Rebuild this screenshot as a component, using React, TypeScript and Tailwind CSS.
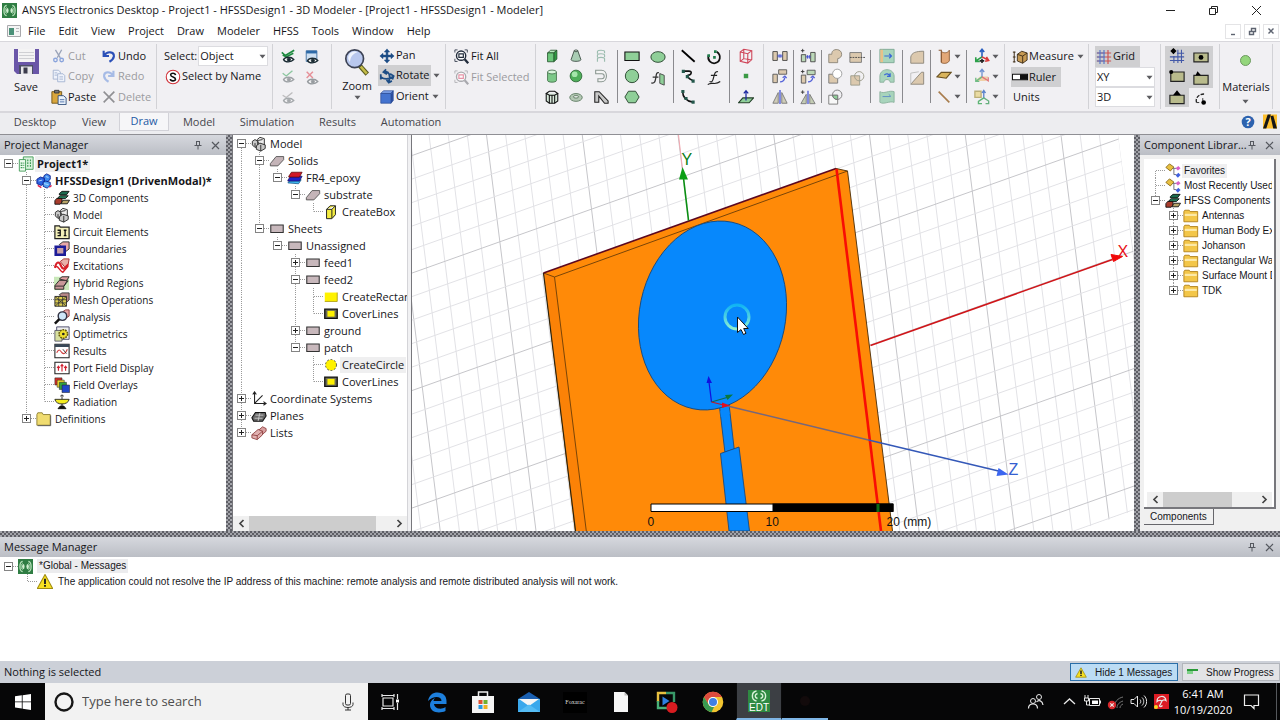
import React from "react";

const UI = "font-['Open_Sans','Noto_Sans',sans-serif]";

/* ---------- small icon helpers ---------- */

function Svg({ s = 18, children }: { s?: number; children: React.ReactNode }) {
  return (
    <svg width={s} height={s} viewBox="0 0 18 18" fill="none" className="shrink-0" aria-hidden="true">
      {children}
    </svg>
  );
}

function Caret({ x = "" }: { x?: string }) {
  return (
    <svg width="7" height="5" viewBox="0 0 7 5" className={"shrink-0 " + x} aria-hidden="true">
      <path d="M0.5 0.8h6L3.5 4.4z" fill="#5c5c60" />
    </svg>
  );
}

function Eye({ c = "#1b2b33" }: { c?: string }) {
  return (
    <g stroke={c}>
      <path d="M4 13c2-3.4 8.500-3.400 11.500 0c-3 3.400-9.500 3.400-11.500 0z" fill="#fff" strokeWidth="1.500" />
      <circle cx="10" cy="13" r="1.800" fill={c} />
    </g>
  );
}

const G = "#8fcf98";
const T = "#dcc9ae";

const icons: Record<string, React.ReactNode> = {
  cut: (
    <g stroke="#9aa3b8" strokeWidth="1.500">
      <path d="M5 2l5.500 9M12 2L7 11" />
      <circle cx="5" cy="13.500" r="2" stroke="#8aa4dc" />
      <circle cx="12" cy="13.500" r="2" stroke="#8aa4dc" />
    </g>
  ),
  copy: (
    <g fill="#eef2fb" stroke="#a3b2d0">
      <path d="M2.500 2.500h6l2 2v8h-8z" />
      <path d="M7.500 6.500h6l2 2v7h-8z" />
      <path d="M9.500 10h4M9.500 12.500h4M4 5.500h3M4 8h3" />
    </g>
  ),
  paste: (
    <g>
      <path d="M1 3h11v13H1z" fill="#d9a63c" stroke="#6e5216" />
      <path d="M4 1.500h5v3H4z" fill="#777" stroke="#333" />
      <path d="M8 7.500h6l3 2.500v7.500H8z" fill="#e9f1fb" stroke="#2b4a78" />
      <path d="M10 12h5M10 14.500h5" stroke="#4a6ea8" />
    </g>
  ),
  undo: <path d="M3 3v6h6M3.500 8.500C7 3 15 4 14.500 9.500c-.3 3-2.500 4.500-5 6" stroke="#2b50b8" strokeWidth="2.400" />,
  redo: <path d="M14 3v6H8M13.500 8.500C10 3 3 4 3.500 9.500c.3 3 2.500 4.500 5 6" stroke="#a6bbe6" strokeWidth="2.400" />,
  del: <path d="M3 3l12 12M15 3L3 15" stroke="#8f8f93" strokeWidth="1.800" />,
  sbn: (
    <g>
      <circle cx="9" cy="9" r="7.600" fill="#fff" stroke="#d03038" strokeWidth="1.200" />
      <path d="M11.800 6.800C11.500 4 6.200 4 6.400 6.800C6.600 9.500 11.800 8.500 11.800 11.400C11.800 14 6.200 14 6 11.200" stroke="#111" strokeWidth="1.800" />
    </g>
  ),
  eyeG: (<g><path d="M2 5l4 3.500L16 2.500M3 8l4 2L15 6" stroke="#1e8a40" strokeWidth="1.800" /><Eye /></g>),
  eyeB: (<g><path d="M2.500 2h12v12h-12z" fill="#cfe0f2" stroke="#3e6d9e" /><path d="M2.500 2h12v3h-12z" fill="#2e6aa8" /><Eye /></g>),
  eyeF: (<g opacity=".55"><path d="M3 6l4 3L14 3" stroke="#3aa45c" strokeWidth="1.500" /><Eye c="#5c6468" /></g>),
  eyeR: (<g opacity=".6"><path d="M3 2l7 7M10 2L3 9" stroke="#e0505c" strokeWidth="1.600" /><Eye c="#5c6468" /></g>),
  eyeN: (<g opacity=".5"><path d="M3 7l4 2.500L14 4" stroke="#888" strokeWidth="1.500" /><Eye c="#5c6468" /></g>),
  pan: <path d="M9 1L6 4.500h2V8H4.500V6L1 9l3.500 3v-2H8v3.500H6L9 17l3-3.500h-2V10h3.500v2L17 9l-3.500-3v2H10V4.500h2z" fill="#1d4d86" stroke="#1d4d86" strokeWidth=".6" />,
  rotate: (
    <g stroke="#1d4d86" strokeWidth="2">
      <path d="M8 1.500l-3 3l4 2.500M5.500 4.500c6-1.500 8 4 5.500 11M8.500 13.500l2.500 3l3.500-2M2 7v6M2 10c4 3 9 3 14-.5M12.500 6.500l4 2.500L15 13" />
    </g>
  ),
  orient: (
    <g stroke="#2a4a94" strokeWidth=".8">
      <path d="M2 5l3-3h11l-2.500 3z" fill="#7fa2ea" />
      <path d="M13.500 5L16 2v11l-2.500 3z" fill="#2d51a6" />
      <path d="M2 5h11.500v11H2z" fill="#4473cf" />
    </g>
  ),
  fit: (
    <g stroke="#222c3c">
      <circle cx="8" cy="7.500" r="5.200" strokeWidth="1.600" fill="#fff" />
      <path d="M5.500 5.500h5v4h-5z" strokeWidth="1.300" />
      <path d="M12 11.500l4 4.500" strokeWidth="2.600" />
      <path d="M1 4V1h3M12 1h3v3M1 11v3h3" strokeWidth=".9" />
    </g>
  ),
  fitSel: (
    <g stroke="#a9a9ae">
      <circle cx="8" cy="7.500" r="5.200" strokeWidth="1.500" fill="#fbfbfb" />
      <path d="M5.500 5.500h5v4h-5z" stroke="#e794a8" strokeWidth="1.300" />
      <path d="M12 11.500l4 4.500" strokeWidth="2.400" />
      <path d="M1 4V1h3M12 1h3v3M1 11v3h3" strokeWidth=".9" />
    </g>
  ),
  box: (
    <g stroke="#22502a" strokeWidth=".9">
      <path d="M4 5.500l3.500-3h7L11 5.500z" fill="#b9ecbf" />
      <path d="M11 5.500l3.500-3v10l-3.500 3z" fill="#2f9a42" />
      <path d="M4 5.500h7v10H4z" fill="#6cc77a" />
    </g>
  ),
  cyl: (
    <g stroke="#3c6a44" strokeWidth=".9">
      <path d="M4 4.500v9.500c0 2.600 10 2.600 10 0V4.500z" fill="#7cc888" />
      <ellipse cx="9" cy="4.500" rx="5" ry="2.200" fill="#d9f4dc" />
    </g>
  ),
  poly: (
    <g stroke="#111" strokeWidth="1.200">
      <path d="M2.500 5v8.500l3.500 2.500h6l3.500-2.500V5" fill="#d8eadb" />
      <path d="M2.500 5L6 2.500h6L15.500 5L12 7H6zM6 7v9M12 7v9M9 7v9" />
    </g>
  ),
  cone: (
    <g stroke="#2c3c34" strokeWidth=".9">
      <path d="M7 3L3.500 13c0 2.700 11 2.700 11 0L11 3z" fill="#a9cdb4" />
      <ellipse cx="9" cy="3.200" rx="2" ry="1" fill="#e6f6ea" />
    </g>
  ),
  sphere: (<g><circle cx="9" cy="9" r="6.600" fill="#4fae5a" stroke="#2f6a38" /><circle cx="7.500" cy="7" r="3.200" fill="#a5e6ab" /></g>),
  torus: (
    <g stroke="#5d7a60">
      <ellipse cx="9" cy="9.500" rx="7" ry="4.400" fill="#b4c8b4" />
      <ellipse cx="9" cy="8.800" rx="3" ry="1.400" fill="#f3f3f3" />
    </g>
  ),
  helix: <path d="M5 15.500V12c0-2 8-2 8 0M5 10.500V8c0-2 8-2 8 0M5 6.500V4c0-2 8-2 8 0M13 12v3.500M13 8v2M13 4v2" stroke="#9dbdb0" strokeWidth="1.300" />,
  spiral: <path d="M3 2.500h6.500c7.500 0 7.500 13 0 13H5.500V12H10c3.500 0 3.500-5.500 0-5.500H3z" fill="#f4f4f4" stroke="#8a9690" strokeWidth="1.200" />,
  wire: <path d="M2 15V3h5l10 10.500v2.500h-4L6.500 8v7z" fill="#c8c8c8" stroke="#222" strokeWidth="1.200" />,
  rect: <path d="M1 4.500h16v9.500H1z" fill={G} stroke="#111" strokeWidth="1.200" />,
  circ: <circle cx="9" cy="9" r="7.500" fill={G} stroke="#24402a" />,
  hex: <path d="M5 2.500h8l4 6.500l-4 6.500H5L1 9z" fill={G} stroke="#24402a" />,
  oval: <ellipse cx="9" cy="9" rx="8" ry="6" fill={G} stroke="#24402a" />,
  fsheet: (
    <g>
      <path d="M11 4l5 2v11l-5-2z" fill={G} stroke="#444" />
      <path d="M10 3C7 2 7 6 6.500 9s-1 6.500-5 5.500M3 8h6.500" stroke="#333" strokeWidth="1.400" />
    </g>
  ),
  line: <path d="M2 2.500l14.500 13" stroke="#000" strokeWidth="2" />,
  spline: (
    <g>
      <path d="M4 3.500h6c4 0 3 4 0 4.500c-3 .5-2 3 5 6.500" stroke="#111" strokeWidth="1.800" />
      <path d="M2 2h3.500v3.500H2zM6.500 8h3.500v3.500H6.500zM13 13h3.500v3.500H13z" fill="#24584c" />
    </g>
  ),
  arc3: (
    <g>
      <path d="M3 3c0 6 4 10.500 12 12" stroke="#111" strokeWidth="1.800" />
      <path d="M1.500 1h3.500v3.500H1.500zM5 9h3.500v3.500H5zM13 13h3.500v3.500H13z" fill="#24584c" />
    </g>
  ),
  arcc: (
    <g>
      <path d="M3 7c-2 6 3 9.500 7 9c6-1 8-9 2-13" stroke="#111" strokeWidth="2" />
      <path d="M8 8h3v3H8zM9 1.500h3v3H9zM1.500 6h3v3h-3z" fill="#1f7a4a" />
    </g>
  ),
  fcurve: <path d="M13.500 2c-3-1-4 2-5 6.500s-2 5.500-4.500 4.500M5.500 6h7M2 16.500c4-4 8 1.500 14-3.500" stroke="#222" strokeWidth="1.300" />,
  region: (
    <g stroke="#cf4458" strokeWidth="1.200">
      <path d="M2.500 4.500l4-3l9 1.500v10L11 17L2.500 15zM2.500 4.500L11 6.500l4.500-3.500M11 6.500V17M6.500 1.500v10.500l9 1.500M6.500 12l-4 3" />
    </g>
  ),
  point: <path d="M6.500 6.500h5v5h-5z" fill="#3b9a45" />,
  plane: (
    <g>
      <path d="M.5 15.500L5.500 10H17.500l-5 5.500z" fill={G} stroke="#24402a" strokeWidth="1.200" />
      <path d="M9 13V2.500M6.500 5L9 2l2.500 3" stroke="#1c28a0" strokeWidth="1.400" />
    </g>
  ),
  mv: (<g><path d="M1 4h5v10H1zM12 4h5v10h-5z" fill={T} stroke="#444" /><path d="M6 9h6M8 7v4M10 7v4" stroke="#3a49d0" /></g>),
  rot: (<g><path d="M1 7h5v9.500H1zM7.500 2h9v5h-9z" fill={T} stroke="#555" /><path d="M9 15.500c4 0 5-2 5.500-5M12 11l2.500-2l2 2.500" stroke="#5663d8" strokeWidth="1.400" /></g>),
  mir: (<g><path d="M1 16L7 4v12zM17 16L11 4v12z" fill="#cfccb8" stroke="#777" /><path d="M9 1v16" stroke="#5663d8" strokeWidth="1.600" /></g>),
  mv2: (<g><path d="M1.500 7.500h5v8h-5zM12 5h5v10.500h-5z" fill="#bcd8b8" stroke="#444" /><path d="M6.500 10h5.500M8.500 8v4M10.500 8v4" stroke="#3a49d0" /><path d="M1 3h4M3 1v4" stroke="#333" /></g>),
  rot2: (<g><path d="M1.500 8h5v9h-5z" fill={T} stroke="#555" /><path d="M8 2.500h9v5H8z" fill="#bcd8b8" stroke="#555" /><path d="M9 15.500c4 0 5-2 5.500-5M12 11l2.500-2l2 2.500" stroke="#5663d8" strokeWidth="1.400" /><path d="M1 4h4M3 2v4" stroke="#333" /></g>),
  mir2: (<g><path d="M1 16.500L7 6v10.500zM17 16.500L11 6v10.500z" fill="#c4ccb4" stroke="#777" /><path d="M9 2v15" stroke="#5663d8" strokeWidth="1.600" /><path d="M1 3.500h4M3 1.500v4" stroke="#333" /></g>),
  unite: <path d="M2 7h3.500C4.500 0 16.500 0 16.500 7c0 3-2 4.500-4.500 5v4.500H2z" fill={T} stroke="#8a8478" />,
  sub: (<g><path d="M2 7h10v10H2z" fill={T} stroke="#777" /><circle cx="11.500" cy="6.500" r="5.200" fill="#fff" stroke="#999" /></g>),
  inter: (<g stroke="#777"><path d="M2 7h10v10H2z" fill="#f8f8f8" /><path d="M6.200 7h5.800v4.800A5.300 5.300 0 0 1 6.200 7z" fill={G} /><circle cx="11.500" cy="6.500" r="5.300" /></g>),
  split: (<g><path d="M1 4h13v11H1z" fill={T} stroke="#777" /><path d="M1 9.500h17" stroke="#444" strokeDasharray="2 1" /></g>),
  impr: (<g stroke="#998"><path d="M2 6.500h10V17H2z" fill={T} /><circle cx="11.500" cy="7" r="5.200" /></g>),
  sw1: (<g><path d="M1 1.500h16v15H1z" fill="#a8d4bc" stroke="#7ba894" /><path d="M1.500 2H4.500v14H1.500z" fill="#e9c089" /><path d="M6 9h8M11.500 6.500L14 9l-2.500 2.500" stroke="#3a66d8" strokeWidth="1.400" /></g>),
  sw2: (<g><path d="M1 16V9C1.500-.5 16.500-.5 17 9v7h-4.500c0-4-7-4-7 0z" fill="#a8d4bc" stroke="#8ab09c" /><path d="M6 8c2-2.500 5-1.500 6 1M12.500 6v3.500H9" stroke="#3a66d8" strokeWidth="1.400" /></g>),
  sw3: (<g><path d="M1 3c5 3 10-2 16 0v12c-6-2-11 3-16 0z" fill="#a8d4bc" stroke="#8ab09c" /><path d="M4 8.500h9M11 6l2.500 2.500" stroke="#5b8ac8" /></g>),
  fil: <path d="M2 16V9C3 4 8 2.500 16.500 2.500V16z" fill={T} stroke="#8a8478" />,
  cham: (<g><path d="M2 16L14 2.500h2.500V16z" fill={T} stroke="#8a8478" /><path d="M2 16V3.500L11 2" stroke="#bbb" /></g>),
  surf: (<g><path d="M6 4c3 2 7 2 9-1.500v12c-2 3-6 3.500-9 2z" fill="#e3a878" stroke="#8a5a34" /><path d="M3 2.500h3V16" stroke="#8a5a34" strokeWidth="1.200" /></g>),
  sheet: <path d="M1 10l5-5h11l-5.500 6.500z" fill="#d9b45c" stroke="#6a5222" strokeWidth="1.300" />,
  edge: <path d="M3 3l12 12" stroke="#a87c4c" strokeWidth="1.800" />,
  cs1: (<g strokeWidth="1.800"><path d="M9 10V2M6.500 4.500L9 1.500l2.500 3" stroke="#2a5fc0" /><path d="M9 10l-6 4M2 10.500V15h4.500" stroke="#2ca04a" /><path d="M9 10l7 3.500M14 10l2.500 4l-4 1" stroke="#d83838" /><path d="M9 12v5M6.500 14.500h5" stroke="#222" /></g>),
  cs2: (<g strokeWidth="1.500" opacity=".65"><path d="M2 13.500l5-4h9l-3 5H5z" fill="#f0c080" /><path d="M9 10V2M6.500 4.500L9 1.500l2.500 3" stroke="#2a5fc0" /><path d="M9 10l-7 5M2 11v4h4" stroke="#2ca04a" /><path d="M9 10l7 4.500v-4" stroke="#d83838" /></g>),
  cs3: (<g strokeWidth="1.500" opacity=".75"><path d="M1 2.500h7v7H1z" fill="#e8d488" stroke="#aa9a50" /><path d="M11 10V2M9 4.500L11 1.500l2 3" stroke="#2a5fc0" /><path d="M11 10l-6 4v2.500h4" stroke="#2ca04a" /><path d="M11 10l5.500 3.500v3H13" stroke="#3a9a58" /></g>),
  measure: (
    <g stroke="#3a2a14">
      <path d="M2.500 3v12M1 3.500h3M1 9h3M1 14.500h3" strokeWidth="1.100" />
      <path d="M6 6l5-3.500l6 2v8l-5 3.500l-6-2.500z" fill="#c69a54" />
      <path d="M6 6l6 2l5-3.500M12 8v8" />
    </g>
  ),
  ruler: (<g><path d="M.5 6h17v6H.5z" fill="#fff" stroke="#111" strokeWidth="1.200" /><path d="M9 6h8.500v6H9z" fill="#111" /></g>),
  grid: (
    <g strokeWidth="1.300">
      <path d="M1 4.500h16M1 9h16M1 13.500h16M13.500 1v16" stroke="#cc5252" />
      <path d="M1 4.500h9M1 9h9M1 13.500h9M4.500 1v16M9 1v16" stroke="#5578c8" />
    </g>
  ),
  snap1: (<g><path d="M1 10h16M1 14h16M10 2v15M14 2v15M5.500 9v8M9 6h8" stroke="#4258a8" strokeWidth="1.200" /><path d="M5 0l3.500 3.500L5 7L1.500 3.500z" fill="#000" /></g>),
  snap2: (<g><path d="M1 4.500h16v10H1z" fill="#b9bb8c" stroke="#222" strokeWidth="1.300" /><circle cx="9" cy="9.500" r="2.700" fill="#000" /></g>),
  snap3: (<g><path d="M2 4.500h15v10.500H2z" fill="#b9bb8c" stroke="#222" strokeWidth="1.300" /><circle cx="2.500" cy="4.500" r="2.300" fill="#000" /></g>),
  snap4: (<g><path d="M1 6h16v10H1z" fill="#b9bb8c" stroke="#222" strokeWidth="1.300" /><path d="M5 1.500l4 4.500H3z" fill="#000" /></g>),
  snap5: (<g><path d="M1 7h16v9.500H1z" fill="#b9bb8c" stroke="#222" strokeWidth="1.300" /><path d="M9 1.500l4.500 5.500h-9z" fill="#000" /></g>),
  snap6: (<g><path d="M4 13C2 7 8 2.500 14 3.500" stroke="#222" strokeWidth="1.500" strokeDasharray="4 1.500" /><path d="M4 13h3M11 8v3" stroke="#222" /><circle cx="12" cy="13" r="2.600" fill="#000" /></g>),
};

/* ---------- tree icons ---------- */

const treeIcons: Record<string, React.ReactNode> = {
  project: (<g><path d="M6 1h11v14H6z" fill="#d9f2dc" stroke="#3f9a55" /><path d="M1.500 4h7v13h-7z" fill="#eefbef" stroke="#3f9a55" /><path d="M3 8h4M3 10.500h4M3 13h4M11 4v9M14 4v9" stroke="#3f9a55" strokeWidth="1.300" strokeDasharray="2 1" /></g>),
  design: (<g stroke="#0b1f8c"><path d="M9 3l3-2l4 2v4l-3 3H8z" fill="#3f8cf0" /><path d="M1 7l4-2.500L9.500 6v5l-3.500 3l-5-2z" fill="#2a62e0" /><path d="M8 10l3-1l5 1.500v3.500L12.500 17L8 15z" fill="#4fa0f4" /><path d="M3 9l4-1M9 12l5 1M11 4l3 1" stroke="#bfe0ff" /><path d="M2 14l4 2.500M15 16l2.500-2" stroke="#e02050" strokeWidth="1.600" /></g>),
  comp3d: (<g stroke="#111"><path d="M6 4l3-2.500h8L14 5.500H6z" fill="#1d6b50" /><path d="M4 9l3-2.500h9L13 9.500H4z" fill="#27805e" /><path d="M1 12l2-2.500h6v4l-2 2.500H1z" fill="#a83c2c" /><path d="M8 15.500l2-4h7.500l-2.500 4z" fill="#b7a468" /></g>),
  model: (<g stroke="#222" fill="#c9c9c9"><path d="M1.500 6l3-2l3 2v5l-3 2l-3-3z" /><path d="M7 4l3-2.500L15 3v7l-5 2z" fill="#eee" /><path d="M6 11l4-3l6 2v4l-5 3l-5-2z" /><path d="M11 10v7M4.500 8v4M8 5l5-1" /></g>),
  circuit: (<g><path d="M1 3V2h5l1 1.500h10V16.500H1z" fill="#f3efb8" stroke="#222" strokeWidth="1.400" /><path d="M4 7h3v6H4M11 7h3M11 13h3M12.500 7v6M4 10h3" stroke="#111" strokeWidth="1.500" /></g>),
  bound: (<g><path d="M6 4l4-3h7v8l-4 3z" fill="#e8a8a8" stroke="#222" /><path d="M2 6.500h10v9H2z" fill="#c8a0a8" stroke="#1c1c98" strokeWidth="3" /></g>),
  excit: (<g><path d="M7 4l4-3h6l-1 6l-4 3z" fill="#e8b0a8" stroke="#a02828" /><path d="M1 11c2-8 5-7 7-2s5 3 8-2" stroke="#d82028" strokeWidth="2.400" /><path d="M1 11c3-5 5 4 9 5l6-7" stroke="#d82028" strokeWidth="1.600" /></g>),
  hybrid: (<g><path d="M0 2h17v15H0z" fill="#c8e8b8" /><path d="M6 4.500L9 2h8l-3 4.500z" fill="#e0a0a0" stroke="#222" /><path d="M1 12l5-6h9l-4 7v3H1z" fill="#c89898" stroke="#222" /><path d="M1 12.500h10l5-6" stroke="#222" /></g>),
  mesh: (<g><path d="M6 3l3-2h8v8l-3 3z" fill="#b88888" stroke="#333" /><path d="M1 5h13v11H1z" fill="#e0d050" stroke="#222" /><path d="M1 8.700h13M1 12.300h13M5.300 5v11M9.700 5v11M1 5l13 11M14 5L1 16" stroke="#333" strokeWidth=".9" /></g>),
  anal: (<g><path d="M10 3l3-2h4v7l-3 2z" fill="#e8a8a8" stroke="#833" /><circle cx="9.500" cy="8" r="4.800" fill="#cfe6f8" stroke="#334" strokeWidth="1.600" /><path d="M6 11.500L1 16.500" stroke="#111" strokeWidth="2.800" /></g>),
  opti: (<g><path d="M3 1h14v14H3z" fill="#eee" stroke="#446" /><path d="M1 5h8v12H1z" fill="#d8e0a0" stroke="#556" /><circle cx="10.500" cy="9" r="4.800" fill="#f0e030" stroke="#665c10" strokeDasharray="2 1" strokeWidth="1.800" /><circle cx="10.500" cy="9" r="1.500" fill="#222" /></g>),
  result: (<g><path d="M1 1.500h16v15H1z" fill="#fff" stroke="#222" strokeWidth="1.200" /><path d="M1 1.500h16v3H1z" fill="#384858" /><path d="M3 11c3-6 4-2 6 0s4 1 6-4" stroke="#d04040" strokeWidth="1.300" /><path d="M10 7l4 5" stroke="#333" /></g>),
  port: (<g><path d="M1 2.500h16v13H1z" fill="#fff" stroke="#222" strokeWidth="1.200" /><path d="M5 12V8M9 13V6M13 12V8M3.500 9L5 7l1.500 2M7.500 7L9 5l1.500 2M11.500 9L13 7l1.500 2" stroke="#d02030" strokeWidth="1.300" /></g>),
  field: (<g stroke="#222" strokeWidth=".6"><path d="M1 1h8v8H1z" fill="#d83028" /><path d="M3.500 3.500h8v8h-8z" fill="#f0d830" /><path d="M6 6h8v8H6z" fill="#30a040" /><path d="M9 9h8.500v8.500H9z" fill="#2048c8" /></g>),
  radi: (<g><path d="M1 6c1 7 15 7 16 0z" fill="#f4ec20" stroke="#222" /><path d="M9 6V1.500M7 2.500L9 1l2 1.500" stroke="#222" /><path d="M9 11v3M4.500 16.500h9L11 13.500H7z" fill="#111" stroke="#111" /></g>),
  folderP: (<g><path d="M1 4l1-2h5l1 2h8v12H1z" fill="#f0dc70" stroke="#8a7c30" /><path d="M16.500 5v11.500H2" stroke="#555" /></g>),
  folder: (<g><path d="M1 4l1-1.500h5L8 4h8.500v11.500H1z" fill="#f3c648" stroke="#b08018" /><path d="M2 6.500h13.500V9H2z" fill="#fce9a6" /></g>),
  slab: <path d="M1.500 12L8 4h8.500v3.500L10 14.500H1.500z" fill="#c4b4b8" stroke="#555" />,
  fr4: (<g strokeWidth=".8"><path d="M1 14.500L4 11h12l-3 4.500z" fill="#40b8f0" stroke="#105080" /><path d="M1 11.500L4 7h13l-3 5.500H1z" fill="#2020c8" stroke="#101060" /><path d="M2 7L5 2.500h12L14 8H2z" fill="#d01828" stroke="#500" /></g>),
  ybox: <path d="M4 6l4-4h6v10l-4 4.500H4zM4 6h6l4-4M10 6v10" fill="#f4ec40" stroke="#222" strokeWidth="1.100" />,
  sheet: <path d="M2 4.500h14v8.500H2z" fill="#c8b8bc" stroke="#333" strokeWidth="1.200" />,
  yrect: (<g><path d="M2 4h14v10H2z" fill="#fff200" /><path d="M2 14h14V4" stroke="#b0a010" /></g>),
  cover: (<g><path d="M2 3.500h14v10.500H2z" fill="#6b6b58" stroke="#111" strokeWidth="1.500" /><path d="M5 5.500h8v6.500H5z" fill="#fff200" /></g>),
  ycirc: <circle cx="9" cy="9" r="6.200" fill="#fff200" stroke="#444" strokeDasharray="2 2" />,
  coord: <path d="M4 1v13h13M4 14L13 5M2 4l2-3l2 3M14 12l3 2l-3 2" stroke="#222" strokeWidth="1.200" />,
  planes: (<g stroke="#111" strokeWidth="1.200"><path d="M1 11l4-6h11l1 4l-4 6H3z" fill="#666" /><path d="M5 8h9M4 11.500h9M10 5.500L8 14.500" stroke="#ccc" strokeWidth="1" /></g>),
  lists: (<g stroke="#833" strokeWidth=".9"><path d="M6 8l7-6l4 2v3l-7 6z" fill="#d8a0a0" /><path d="M1 11l7-6l5 2v4l-6 5.500l-6-2z" fill="#e0b0b0" /><path d="M7 12l6-5M1 11l6 1v4" /></g>),
  fav: (<g><path d="M1 5l4-4l5 3.500L6 9z" fill="#e8c040" stroke="#8a6a18" /><path d="M9 6h4M10 6v7h3" stroke="#667" /><path d="M12 6l3-2.500l2.500 2.500l-3 2.500z" fill="#d860c8" /><path d="M12 14l3-3l2.500 2.500l-3 3z" fill="#4060e0" /></g>),
};

/* ---------- tree ---------- */

type Node = { t: string; i: string; open?: boolean; kids?: Node[]; sel?: boolean; bold?: boolean };

function Connector({ h, up, down, across, mark }: { h: number; up?: boolean; down?: boolean; across?: boolean; mark?: "+" | "-" }) {
  const m = Math.floor(h / 2) + 0.5;
  return (
    <svg width="18" height={h} viewBox={`0 0 18 ${h}`} className="shrink-0" aria-hidden="true">
      <g stroke="#9a9a9a" strokeDasharray="1 1">
        {up && <path d={`M8.500 0V${m}`} />}
        {down && <path d={`M8.500 ${m + 0.5}V${h}`} />}
        {across && <path d={`M9 ${m}H18`} />}
      </g>
      {mark && (
        <g stroke="#848484">
          <rect x="4.500" y={m - 4} width="8" height="8" fill="#fff" />
          <path d={`M6 ${m}h5`} stroke="#222" />
          {mark === "+" && <path d={`M8.500 ${m - 2.5}v5`} stroke="#222" />}
        </g>
      )}
    </svg>
  );
}

function Rows({ nodes, h, trail = [] }: { nodes: Node[]; h: number; trail?: boolean[] }) {
  return (
    <>
      {nodes.map((n, k) => {
        const last = k === nodes.length - 1;
        const first = k === 0 && trail.length === 0;
        return (
          <li key={k}>
            <div className="flex items-center whitespace-nowrap" style={{ height: h }}>
              {trail.map((go, j) => (
                <Connector key={j} h={h} up={go} down={go} />
              ))}
              <Connector h={h} up={!first} down={!last} across mark={n.kids ? (n.open ? "-" : "+") : undefined} />
              <Svg s={16}>{treeIcons[n.i]}</Svg>
              <span className={"ml-px px-0.5 " + (n.sel ? "bg-[#efeff0] " : "") + (n.bold ? "text-[11px] font-bold" : "")}>{n.t}</span>
            </div>
            {n.open && n.kids && (
              <ul>
                <Rows nodes={n.kids} h={h} trail={[...trail, !last]} />
              </ul>
            )}
          </li>
        );
      })}
    </>
  );
}

const leaf = (t: string, i: string): Node => ({ t, i });

const projectTree: Node[] = [
  {
    t: "Project1*", i: "project", open: true, sel: true, bold: true,
    kids: [
      {
        t: "HFSSDesign1 (DrivenModal)*", i: "design", open: true, bold: true,
        kids: [
          leaf("3D Components", "comp3d"), leaf("Model", "model"), leaf("Circuit Elements", "circuit"),
          leaf("Boundaries", "bound"), leaf("Excitations", "excit"), leaf("Hybrid Regions", "hybrid"),
          leaf("Mesh Operations", "mesh"), leaf("Analysis", "anal"), leaf("Optimetrics", "opti"),
          leaf("Results", "result"), leaf("Port Field Display", "port"), leaf("Field Overlays", "field"),
          leaf("Radiation", "radi"),
        ],
      },
      { t: "Definitions", i: "folderP", kids: [] },
    ],
  },
];

const modelTree: Node[] = [
  {
    t: "Model", i: "model", open: true,
    kids: [
      { t: "Solids", i: "slab", open: true, kids: [
        { t: "FR4_epoxy", i: "fr4", open: true, kids: [
          { t: "substrate", i: "slab", open: true, kids: [leaf("CreateBox", "ybox")] },
        ] },
      ] },
      { t: "Sheets", i: "sheet", open: true, kids: [
        { t: "Unassigned", i: "sheet", open: true, kids: [
          { t: "feed1", i: "sheet", kids: [] },
          { t: "feed2", i: "sheet", open: true, kids: [leaf("CreateRectangle", "yrect"), leaf("CoverLines", "cover")] },
          { t: "ground", i: "sheet", kids: [] },
          { t: "patch", i: "sheet", open: true, kids: [{ t: "CreateCircle", i: "ycirc", sel: true }, leaf("CoverLines", "cover")] },
        ] },
      ] },
    ],
  },
  { t: "Coordinate Systems", i: "coord", kids: [] },
  { t: "Planes", i: "planes", kids: [] },
  { t: "Lists", i: "lists", kids: [] },
];

const libTree: Node[] = [
  { t: "Favorites", i: "fav", sel: true },
  leaf("Most Recently Used", "fav"),
  {
    t: "HFSS Components", i: "comp3d", open: true,
    kids: ["Antennas", "Human Body Exposure", "Johanson", "Rectangular Waveguide", "Surface Mount Devices", "TDK"].map(
      (t) => ({ t, i: "folder", kids: [] })
    ),
  },
];

/* ---------- ribbon parts ---------- */

function Tool({ i, label, off, on, w = "" }: { i: string; label: string; off?: boolean; on?: boolean; w?: string }) {
  return (
    <button className={"flex h-[21px] items-center gap-px whitespace-nowrap px-px " + w + (on ? " bg-[#cfcfd1]" : "") + (off ? " text-[#9b9b9f]" : "")}>
      <Svg s={16}>{icons[i]}</Svg>
      {label}
    </button>
  );
}

function Cell({ i, name, caret }: { i: string; name: string; caret?: boolean }) {
  return (
    <button aria-label={name} className="flex h-[21px] w-full items-center justify-center">
      <Svg s={16}>{icons[i]}</Svg>
      {caret && <Caret x="ml-0.5" />}
    </button>
  );
}

function Col({ w, items, caret }: { w: string; items: [string, string][]; caret?: boolean }) {
  return (
    <div className={"flex shrink-0 flex-col " + w}>
      {items.map(([i, name]) => (
        <Cell key={name} i={i} name={name} caret={caret} />
      ))}
    </div>
  );
}

const Bar = () => <div className="my-1 w-px shrink-0 bg-[#8a8a8e]" />;

function Group({ w, children }: { w: string; children: React.ReactNode }) {
  return <div className={"my-0.5 flex shrink-0 border-r border-[#d2d2d6] py-0.5 " + w}>{children}</div>;
}

function Drop({ id, label, w, value }: { id: string; label?: string; w: string; value: string }) {
  return (
    <div className={"relative h-5 " + w}>
      <select id={id} aria-label={label} defaultValue={value} className="h-full w-full appearance-none border border-[#dcdce0] bg-white pl-px">
        <option>{value}</option>
      </select>
      <Caret x="pointer-events-none absolute right-0.5 top-2" />
    </div>
  );
}

function Ribbon() {
  return (
    <div className="flex h-[72px] shrink-0 overflow-hidden border-b-2 border-t border-[#d8d7dc] bg-[#f1f0f3] pl-0.5">
      <Group w="w-[155px]">
        <button className="flex w-12 flex-col items-center pt-0.5">
          <svg width="27" height="27" viewBox="0 0 27 27" aria-hidden="true">
            <path d="M1 1h25v25H4l-3-3z" fill="#6a56a8" />
            <path d="M5 1h17v13H5z" fill="#f4f3f4" />
            <path d="M6 4.500h15M6 7.500h15M6 10.500h15" stroke="#d0d0d4" />
            <path d="M6 17h14v9H6z" fill="#4d4f66" />
            <path d="M8 18.500h11v7.500H8z" fill="#e8e8ea" />
            <path d="M10.500 19.500h4v6h-4z" fill="#3c3c4c" />
          </svg>
          <span className="mt-1">Save</span>
        </button>
        <div className="flex w-[50px] flex-col items-start">
          <Tool i="cut" label="Cut" off />
          <Tool i="copy" label="Copy" off />
          <Tool i="paste" label="Paste" />
        </div>
        <div className="flex flex-col items-start">
          <Tool i="undo" label="Undo" />
          <Tool i="redo" label="Redo" off />
          <Tool i="del" label="Delete" off />
        </div>
      </Group>
      <Group w="w-[116px] flex-col pl-[7px]">
        <div className="flex items-center gap-px">
          <label htmlFor="selmode">Select:</label>
          <Drop id="selmode" w="w-[70px]" value="Object" />
        </div>
        <Tool i="sbn" label="Select by Name" />
      </Group>
      <Group w="w-[59px] pl-[3px]">
        <Col w="w-6" items={[["eyeG", "Show selection"], ["eyeF", "Show in active view"], ["eyeN", "Hide in active view"]]} />
        <Col w="w-6" items={[["eyeB", "Visibility dialog"], ["eyeR", "Hide selection"]]} />
      </Group>
      <Group w="w-[114px]">
        <button className="flex w-[46px] flex-col items-center pl-1 pt-0.5">
          <svg width="28" height="28" viewBox="0 0 28 30" aria-hidden="true">
            <path d="M17 19l8 9" stroke="#5a5a20" strokeWidth="5" />
            <path d="M18 20l6.500 7.500" stroke="#c4bc48" strokeWidth="2.600" />
            <circle cx="11.500" cy="11.500" r="9.500" fill="#b9c8ee" stroke="#3c4254" strokeWidth="1.800" />
            <path d="M4.500 11a7 7 0 0 1 10-6.500C10 6 7 9 6.500 15a7 7 0 0 1-2-4z" fill="#eef3fd" />
          </svg>
          <span className="mt-0.5">Zoom</span>
          <Caret />
        </button>
        <div className="flex flex-col">
          <Tool i="pan" label="Pan" />
          <div className="flex items-center"><Tool i="rotate" label="Rotate" on w="w-[53px]" /><Caret x="ml-0.5" /></div>
          <div className="flex items-center"><Tool i="orient" label="Orient" w="w-[53px]" /><Caret x="ml-px" /></div>
        </div>
      </Group>
      <Group w="w-[90px] flex-col pl-[7px]">
        <Tool i="fit" label="Fit All" />
        <Tool i="fitSel" label="Fit Selected" off />
      </Group>
      <Group w="w-[228px] pl-1">
        <Col w="w-6" items={[["box", "Box"], ["cyl", "Cylinder"], ["poly", "Polyhedron"]]} />
        <Col w="w-6" items={[["cone", "Cone"], ["sphere", "Sphere"], ["torus", "Torus"]]} />
        <Col w="w-[29px] pr-1" items={[["helix", "Helix"], ["spiral", "Spiral"], ["wire", "Bondwire"]]} />
        <Bar />
        <Col w="w-7" items={[["rect", "Rectangle"], ["circ", "Circle"], ["hex", "Regular polygon"]]} />
        <Col w="w-[27px] pr-1" items={[["oval", "Ellipse"], ["fsheet", "Equation surface"]]} />
        <Bar />
        <Col w="w-7" items={[["line", "Line"], ["spline", "Spline"], ["arc3", "Arc by points"]]} />
        <Col w="w-[27px] pr-1" items={[["arcc", "Center arc"], ["fcurve", "Equation curve"]]} />
        <Bar />
        <Col w="w-[31px]" items={[["region", "Region"], ["point", "Point"], ["plane", "Plane"]]} />
      </Group>
      <Group w="w-[241px] pl-0.5">
        <Col w="w-[27px]" items={[["mv", "Move"], ["rot", "Rotate copy"], ["mir", "Mirror"]]} />
        <Bar />
        <Col w="w-[27px]" items={[["mv2", "Duplicate along line"], ["rot2", "Duplicate around axis"], ["mir2", "Duplicate mirror"]]} />
        <Bar />
        <Col w="w-[26px]" items={[["unite", "Unite"], ["sub", "Subtract"], ["inter", "Intersect"]]} />
        <Col w="w-[22px] pr-1" items={[["split", "Split"], ["impr", "Imprint"]]} />
        <Bar />
        <Col w="w-[31px]" items={[["sw1", "Sweep along vector"], ["sw2", "Sweep around axis"], ["sw3", "Sweep along path"]]} />
        <Bar />
        <Col w="w-[27px]" items={[["fil", "Fillet"], ["cham", "Chamfer"]]} />
        <Bar />
        <Col w="w-[35px]" caret items={[["surf", "Surface"], ["sheet", "Sheet"], ["edge", "Edge"]]} />
        <Bar />
        <Col w="w-[38px]" caret items={[["cs1", "Relative coordinate system"], ["cs2", "Face coordinate system"], ["cs3", "Object coordinate system"]]} />
      </Group>
      <Group w="w-[84px] flex-col items-start pl-1.5">
        <div className="flex items-center"><Tool i="measure" label="Measure" /><Caret x="ml-0.5" /></div>
        <Tool i="ruler" label="Ruler" on w="w-[50px]" />
        <button className="h-[21px] px-0.5">Units</button>
      </Group>
      <Group w="w-[72px] flex-col items-start pl-1.5">
        <Tool i="grid" label="Grid" on w="w-[45px]" />
        <Drop id="plane" label="Drawing plane" w="w-[60px]" value="XY" />
        <Drop id="mode" label="Movement mode" w="w-[60px]" value="3D" />
      </Group>
      <Group w="w-[59px] pl-1">
        <div className="flex bg-[#cfcfd1]"><Col w="w-6" items={[["snap1", "Snap to grid"], ["snap3", "Snap to vertex"], ["snap5", "Snap to edge center"]]} /></div>
        <div className="h-[42px] bg-[#cfcfd1]"><Col w="w-6" items={[["snap2", "Snap to face center"], ["snap4", "Snap to edge"], ["snap6", "Snap to arc center"]]} /></div>
      </Group>
      <Group w="w-[53px] justify-center">
        <button className="flex flex-col items-center pt-2">
          <svg width="13" height="13" viewBox="0 0 13 13" className="mb-3" aria-hidden="true">
            <circle cx="6.500" cy="6.500" r="5" fill="#94d67c" stroke="#6d9a60" />
          </svg>
          <span className="leading-4">Materials</span>
          <Caret x="mt-1" />
        </button>
      </Group>
    </div>
  );
}

/* ---------- panel header ---------- */

function PanelHead({ title }: { title: string }) {
  return (
    <div className="flex h-5 shrink-0 items-center bg-linear-to-b from-[#d6d8de] to-[#bbbec5] pl-1 pr-1.5">
      <h2 className="grow whitespace-nowrap">{title}</h2>
      <button aria-label="Auto hide" className="mr-2">
        <svg width="10" height="10" viewBox="0 0 10 10" fill="none" stroke="#55585f" aria-hidden="true">
          <path d="M3 1.500h4M3.500 1.500v4M6.500 1v5M1.500 5.500h7M5 6v3.500" />
        </svg>
      </button>
      <button aria-label="Close panel">
        <svg width="9" height="9" viewBox="0 0 9 9" fill="none" stroke="#55585f" strokeWidth="1.200" aria-hidden="true">
          <path d="M1 1l7 7M8 1L1 8" />
        </svg>
      </button>
    </div>
  );
}

function HScroll({ thumb }: { thumb: string }) {
  return (
    <div className="flex h-[15px] shrink-0 items-center bg-[#f0f0f0]">
      <button aria-label="Scroll left" className="flex w-4 shrink-0 justify-center">
        <svg width="7" height="9" viewBox="0 0 7 9" fill="none" stroke="#444" strokeWidth="1.700"><path d="M5.500 1L2 4.500L5.500 8" /></svg>
      </button>
      <div className="flex h-full grow">
        <div className={"h-full bg-[#cdcdcd] " + thumb} />
      </div>
      <button aria-label="Scroll right" className="flex w-4 shrink-0 justify-center">
        <svg width="7" height="9" viewBox="0 0 7 9" fill="none" stroke="#444" strokeWidth="1.700"><path d="M1.500 1L5 4.500L1.500 8" /></svg>
      </button>
    </div>
  );
}

const DITHER = "shrink-0 bg-[repeating-conic-gradient(#5e5f66_0_25%,#a2a3a9_0_50%)] bg-[length:4px_4px]";

/* ---------- 3D view ---------- */

function Viewport() {
  const across = Array.from({ length: 29 }, (_, n) => n - 12);
  const along = Array.from({ length: 40 }, (_, n) => n - 6);
  return (
    <svg viewBox="411 135 723 396" preserveAspectRatio="xMidYMid slice" className="h-full w-full bg-white" role="img" aria-label="3D model view">
      <defs>
        <clipPath id="floor">
          <path d="M371 135L1117.600 135L1165.600 499L434.600 760z" />
        </clipPath>
        <linearGradient id="busy" x1="0" y1="0" x2="0" y2="1">
          <stop offset="0" stopColor="#10b4f4" />
          <stop offset="1" stopColor="#8ff0d0" />
        </linearGradient>
      </defs>
      <g clipPath="url(#floor)" fill="none">
        {along.map((k) => (
          <path key={"b" + k} d={`M${486 + k * 19.15} 135l53 424`} stroke={k % 5 === 0 ? "#c6c6ca" : "#e2e2e6"} />
        ))}
        {across.map((k) => (
          <path key={"a" + k} d={`M363 ${407.8 + k * 23.5}L1180 ${117 + k * 23.5}`} stroke={k % 5 === 0 ? "#c6c6ca" : "#e2e2e6"} />
        ))}
        <path d="M678 135l4 34" stroke="#f3a8b0" />
      </g>
      <g strokeWidth="1">
        <path d="M543 273L835.500 168.500L847 171L892 531H574.500z" fill="#ff8a08" />
        <path d="M543 273l11 4l31.800 254h-11.300z" fill="#fb8207" />
        <path d="M543 273l11 4L847 171M554 277l31.800 254" fill="none" stroke="#7a4508" />
        <path d="M847 171l45 360" stroke="#5a3a10" />
        <path d="M543 273l32 258" stroke="#2a2410" strokeWidth="1.200" />
        <path d="M543 273L835.500 168.500" stroke="#5c0820" strokeWidth="1.600" />
        <path d="M835.500 168.500L847 171" stroke="#5a3a10" />
      </g>
      <path d="M836 169L880.500 531" stroke="#f80d05" strokeWidth="2.600" />
      <g fill="#0788fc" stroke="#174a80" strokeWidth=".9">
        <path d="M719 407l9.500-3l5.200 45l-9.300 3z" />
        <path d="M720 453.500l18.500-6.500l10.500 84h-20.500z" />
        <ellipse cx="712" cy="315.500" rx="73" ry="95.300" transform="rotate(11.800 712 315.500)" />
      </g>
      <path d="M719.800 411l8.500-3l1 6l-9 3z" fill="#0788fc" />
      <path d="M688 220.500L683 178" stroke="#0a8f12" strokeWidth="1.600" />
      <path d="M682 167l5.500 12.500h-9z" fill="#0a9f14" />
      <path d="M870 345.500L1112 259.500" stroke="#d01418" strokeWidth="1.500" />
      <path d="M1122 256.500l-11.500-2l2.500 7z" fill="#f00808" stroke="#f00808" />
      <path d="M725 405.500L868 440" stroke="#76677c" strokeWidth="1.500" />
      <path d="M868 440L998 471" stroke="#3458b8" strokeWidth="1.500" />
      <path d="M1008 474.500l-12 1.500l2-8z" fill="#3c66f0" />
      <path d="M711 402l-2.500-20" stroke="#1010e0" strokeWidth="1.200" />
      <path d="M708 376l3.500 7h-5.500z" fill="#1010e0" />
      <path d="M711 402l17-5" stroke="#106a50" strokeWidth="1.200" />
      <path d="M732.500 394.500l-8 .5l2.500 5z" fill="#0a7840" />
      <path d="M711 402l12 3" stroke="#c01828" strokeWidth="1.200" />
      <path d="M729.500 405.500l-8 2.500v-5.500z" fill="#e01020" />
      <g className="font-['Liberation_Sans',sans-serif] text-[16px]">
        <text x="681" y="165" fill="#0a7c14">Y</text>
        <text x="1117" y="257" fill="#e81018">X</text>
        <text x="1008" y="475" fill="#3560d0">Z</text>
      </g>
      <path d="M650.500 504h242v7.500h-242z" fill="#fff" stroke="#000" />
      <path d="M772 503.500h121v8.500H772z" fill="#000" />
      <path d="M876 504h3v8h-3z" fill="#0c6a14" />
      <g className="font-['Liberation_Sans',sans-serif] text-[12px]" fill="#111">
        <text x="647" y="526">0</text>
        <text x="765" y="526">10</text>
        <text x="886" y="526">20 (mm)</text>
      </g>
      <circle cx="736.500" cy="317" r="12" fill="none" stroke="url(#busy)" strokeWidth="3" />
      <path d="M737 317v15.500l3.500-3l2.500 5l2.500-1.200l-2.300-4.800h4.500z" fill="#fff" stroke="#111" />
    </svg>
  );
}

/* ---------- window bars ---------- */

function Logo({ s = 15 }: { s?: number }) {
  return (
    <svg width={s} height={s} viewBox="0 0 16 16" fill="none" className="shrink-0" aria-hidden="true">
      <path d="M0 0h16v16H0z" fill="#2f7d43" />
      <g fill="#cfeecf"><ellipse cx="5.700" cy="8" rx="1.300" ry="2.800" /><ellipse cx="10.300" cy="8" rx="1.300" ry="2.800" /></g>
      <path d="M5 2.500C1 3 1 13 5 13.500M11 2.500C15 3 15 13 11 13.500" stroke="#b5e0b8" strokeWidth="1.300" />
      <path d="M5 4.500C2.800 6 2.800 10 5 11.500M11 4.500c2.200 1.500 2.200 5.500 0 7" stroke="#b5e0b8" />
    </svg>
  );
}

function TitleBar() {
  return (
    <header className="flex h-[21px] shrink-0 items-center bg-white pl-0.5 pr-0.5">
      <Logo />
      <h1 className="ml-[5px] grow whitespace-nowrap">
        ANSYS Electronics Desktop - Project1 - HFSSDesign1 - 3D Modeler - [Project1 - HFSSDesign1 - Modeler]
      </h1>
      <div className="flex">
        {[
          ["Minimize", "M1 5.500h9"],
          ["Restore", "M1.500 3.500h6v6h-6zM3.500 3.500v-2h6v6h-2"],
          ["Close", "M1 1l9 9M10 1L1 10"],
        ].map(([n, d]) => (
          <button key={n} aria-label={n} className="flex w-[43px] justify-center">
            <svg width="11" height="11" viewBox="0 0 11 11" fill="none" stroke="#222"><path d={d} /></svg>
          </button>
        ))}
      </div>
    </header>
  );
}

function MenuBar() {
  return (
    <nav className="flex h-5 shrink-0 items-center bg-white pl-[7px] pr-px">
      <svg width="14" height="12" viewBox="0 0 14 12" aria-hidden="true">
        <path d="M.5.5h13v11H.5z" fill="#f4f4f4" stroke="#a8a8ac" />
        <path d="M2 3h5v7H2z" fill="#4a9078" />
        <path d="M9 3h3v1H9zM9 6h3v1H9z" fill="#b8b8bc" />
      </svg>
      <ul className="ml-[7px] flex grow gap-[13px]">
        {["File", "Edit", "View", "Project", "Draw", "Modeler", "HFSS", "Tools", "Window", "Help"].map((m) => (
          <li key={m}><button>{m}</button></li>
        ))}
      </ul>
      <div className="flex gap-[3px] pt-px">
        {[
          ["Minimize view", "M2 7.500h4"],
          ["Restore view", "M1.500 4.500h4v3h-4zM3.500 4V1.500h4v3H6"],
          ["Close view", "M1.500 1.500l5 5M6.500 1.500l-5 5"],
        ].map(([n, d]) => (
          <button key={n} aria-label={n} className="flex h-[15px] w-4 items-center justify-center border border-[#e4e4e6]">
            <svg width="9" height="9" viewBox="0 0 9 9" fill="none" stroke="#5d6370" strokeWidth="1.400"><path d={d} /></svg>
          </button>
        ))}
      </div>
    </nav>
  );
}

function RibbonTabs() {
  return (
    <div className="flex h-[22px] shrink-0 items-center border-b border-[#8f8f94] bg-[#ededf0] pl-px pr-[3px] text-[#46464c]">
      <div role="tablist" className="flex h-full grow items-start">
        <button role="tab" className="h-[18px] w-[68px]">Desktop</button>
        <button role="tab" className="h-[18px] w-[50px]">View</button>
        <button role="tab" aria-selected="true" className="h-[18px] w-[50px] border border-t-0 border-[#d2d2d8] bg-[#f6f6f8] text-[#1d5aa5]">Draw</button>
        <button role="tab" className="h-[18px] w-[60px]">Model</button>
        <button role="tab" className="h-[18px] w-[76px]">Simulation</button>
        <button role="tab" className="h-[18px] w-[65px]">Results</button>
        <button role="tab" className="h-[18px] w-[82px]">Automation</button>
      </div>
      <button aria-label="Help" className="mb-1 mr-2">
        <svg width="14" height="14" viewBox="0 0 14 14"><circle cx="7" cy="7" r="6.300" fill="#2d62ae" /><text x="7" y="11" textAnchor="middle" fontSize="11" fontWeight="bold" fill="#fff">?</text></svg>
      </button>
      <svg width="14" height="15" viewBox="0 0 15 15" className="mb-1" aria-hidden="true">
        <path d="M0 0h15v15H0z" fill="#fdbf2d" />
        <path d="M5 0h3.500L3.500 15H0zM8 2l3-1l4 14h-4z" fill="#151515" />
      </svg>
    </div>
  );
}

/* ---------- taskbar ---------- */

function TaskIcon({ name, active, under, children }: { name: string; active?: boolean; under?: boolean; children: React.ReactNode }) {
  return (
    <button aria-label={name} className={"flex h-full w-[46px] shrink-0 items-center justify-center " + (active ? "border-x border-b-2 border-x-[#0a0a0b] border-b-[#7fb6e6] bg-[#3c3f44]" : under ? "border-b-2 border-[#7fb6e6]" : "")}>
      <svg width="24" height="24" viewBox="0 0 24 24" fill="none" aria-hidden="true">{children}</svg>
    </button>
  );
}

function Tray({ name, children }: { name: string; children: React.ReactNode }) {
  return (
    <button aria-label={name} className="flex w-[23px] justify-center">
      <svg width="17" height="17" viewBox="0 0 17 17" fill="none" stroke="#e8e8e8" aria-hidden="true">{children}</svg>
    </button>
  );
}

function Taskbar() {
  return (
    <footer className="flex h-[37px] shrink-0 bg-[#060607] text-white">
      <button aria-label="Start" className="flex w-[45px] shrink-0 items-center justify-center">
        <svg width="16" height="16" viewBox="0 0 16 16" fill="#fff"><path d="M0 2.300l6.800-1v6.200H0zM7.600 1.200L16 0v7.500H7.600zM0 8.300h6.800v6.200L0 13.600zM7.600 8.300H16V16l-8.400-1.300z" /></svg>
      </button>
      <div className="flex w-[323px] shrink-0 items-center bg-[#f2f2f2] pl-2 pr-[13px] text-[#3f3f3f]">
        <svg width="22" height="22" viewBox="0 0 22 22" fill="none" aria-hidden="true"><circle cx="11" cy="11" r="8.500" stroke="#161616" strokeWidth="2.400" /></svg>
        <input aria-label="Search" placeholder="Type here to search" className="ml-[7px] min-w-0 grow bg-transparent text-[13px] outline-none placeholder:text-[#4d4d4d]" />
        <svg width="14" height="18" viewBox="0 0 14 18" fill="none" stroke="#333" aria-hidden="true">
          <rect x="4.500" y="1" width="5" height="11" rx="1.500" /><path d="M2 9.500v2c0 4 10 4 10 0v-2M7 14.500V17M4 17h6" />
        </svg>
      </div>
      <TaskIcon name="Task view">
        <path d="M4 8h10v8H4zM3 5.500h12M3 18.500h12M3 4v3M15 4v3M3 17v3M15 17v3M18.500 4v5M18.500 13v7" stroke="#e8e8e8" strokeWidth="1.200" />
        <path d="M17 9.500h3v3h-3z" fill="#fff" />
      </TaskIcon>
      <TaskIcon name="Edge">
        <path d="M3 11C4 5 8 2.500 12.500 2.500C18 2.500 21.500 6 21.500 11v3H9c.5 5 7.500 6 11.500 3v4C14 24 5 22.500 5 15c0-3 1.800-5.500 5-7C9 9 8.500 10 8.500 11h8C16.500 5.500 8 5.500 3 11z" fill="#1d7fdc" />
      </TaskIcon>
      <TaskIcon name="Store">
        <path d="M7.500 7V2h9v5" stroke="#eee" strokeWidth="1.500" />
        <path d="M1 6h22v17H1z" fill="#f4f4f4" />
        <path d="M7.500 10h4v4h-4z" fill="#e05030" /><path d="M12.500 10h4v4h-4z" fill="#70b030" />
        <path d="M7.500 15h4v4h-4z" fill="#2898e0" /><path d="M12.500 15h4v4h-4z" fill="#f0b020" />
      </TaskIcon>
      <TaskIcon name="Mail">
        <path d="M1 9L12 2l11 7v13H1z" fill="#1a5fb0" /><path d="M1 9h22v13H1z" fill="#3aa8ec" />
        <path d="M2 9h20L12 16z" fill="#f6f6f6" /><path d="M1 22L12 14.500L23 22z" fill="#55bcf4" />
      </TaskIcon>
      <TaskIcon name="Foxarac">
        <path d="M0 2h24v21H0z" fill="#000" />
        <text x="12" y="14" textAnchor="middle" fontSize="6" fill="#ddd" fontFamily="Liberation Serif">Foxarac</text>
      </TaskIcon>
      <TaskIcon name="Document"><path d="M5 2h10.500L19 5.500V22H5z" fill="#f6f6f6" /><path d="M15.500 2v3.500H19z" fill="#bbb" /></TaskIcon>
      <TaskIcon name="Recorder">
        <path d="M3 12V3h8" stroke="#e8c040" strokeWidth="2.400" /><path d="M11 3h8v9" stroke="#389868" strokeWidth="2.400" /><path d="M3 11v7h9" stroke="#48b078" strokeWidth="2.400" />
        <path d="M7.500 6.500l7 4.500l-7 4.500z" fill="#2f7fe0" /><circle cx="17" cy="17.500" r="5.500" fill="#d81c20" />
      </TaskIcon>
      <TaskIcon name="Chrome">
        <circle cx="12" cy="12" r="10.300" fill="#f2c530" />
        <path d="M12 1.700a10.300 10.300 0 0 1 9 5.300H12a5 5 0 0 0-4.500 7L3 7a10.300 10.300 0 0 1 9-5.300z" fill="#dd4b3e" />
        <path d="M3 7l5 8c1 1.600 3 2.200 5 2l-2.500 5.200A10.300 10.300 0 0 1 3 7z" fill="#3a9a52" />
        <circle cx="12" cy="12" r="5" fill="#fff" /><circle cx="12" cy="12" r="4" fill="#3f7fe4" />
      </TaskIcon>
      <TaskIcon name="Electronics Desktop" active>
        <path d="M1 1h22v22H1z" fill="#2f8a42" />
        <g stroke="#d8f2d8" strokeWidth="1.400"><path d="M9.500 2c-5.500 1-5.500 9 0 10M14.500 2c5.500 1 5.500 9 0 10M10.500 4.500c-3 1-3 4 0 5M13.500 4.500c3 1 3 4 0 5" /></g>
        <text x="12" y="22" textAnchor="middle" fontSize="10" fill="#fff" fontFamily="Liberation Sans">EDT</text>
      </TaskIcon>
      <TaskIcon name="Background app" under><circle cx="12" cy="12" r="5" fill="#120a0b" /></TaskIcon>
      <div className="flex grow items-center justify-end">
        <Tray name="People"><circle cx="6" cy="8" r="2.500" /><circle cx="12" cy="4" r="2.500" /><path d="M1.500 15.500c0-6 9-6 9 0M9.500 9c2-2.500 6-1.500 6.500 3" strokeWidth="1.200" /></Tray>
        <div className="w-[11px]" />
        <Tray name="Show hidden icons"><path d="M3 11l5.500-5l5.500 5" strokeWidth="1.300" /></Tray>
        <Tray name="Battery"><path d="M5.500 5.500h10v7h-10zM16.500 7.500v3M1 2v3M4 2v3M.5 5h4v3h-4zM2.500 8v4h3" /><path d="M8 7.500h6v3.500H8z" fill="#fff" stroke="none" /></Tray>
        <Tray name="Network"><path d="M7 15C7 9 11 5 16 4M10 15c0-4 3-6 6-7M13 15c0-2 1-3 3-4" stroke="#777" /><circle cx="5" cy="12" r="4.200" fill="#d8282c" stroke="none" /><path d="M3.300 10.300l3.400 3.400M6.700 10.300l-3.400 3.400" strokeWidth="1.200" /></Tray>
        <Tray name="Volume"><path d="M1 6.500h3l3.500-3.500v11L4 10.500H1zM10 6.500c1 1 1 3 0 4M12 4.500c2.300 2 2.300 6 0 8M14 2.500c3.500 3.500 3.500 8.500 0 12" /></Tray>
        <Tray name="Antivirus"><path d="M1 1h15v15H1z" fill="#dc1c24" stroke="none" /><path d="M4 8.500c0-6 8.500-7 9-1c-1-1-3-1-4 .5c-1-1-3.500-1-5 .5zM9 8l-2.500 5c1 1 2 .5 3-.5" strokeWidth="1.200" /><circle cx="3" cy="14" r="2" fill="#f4d820" stroke="none" /></Tray>
        <div className="w-[60px] text-center text-[11px] leading-4">
          <div>6:41 AM</div>
          <div>10/19/2020</div>
        </div>
        <button aria-label="Notifications" className="mx-2.5">
          <svg width="17" height="17" viewBox="0 0 17 17" fill="none" stroke="#eee" strokeWidth="1.200"><path d="M1.500 2h14v10.500H11v3l-3-3H1.500z" /></svg>
        </button>
        <div className="ml-1.5 h-full w-[4px] border-l border-[#55585c]" />
      </div>
    </footer>
  );
}

const Warn = () => (
  <svg width="16" height="15" viewBox="0 0 15 14" className="shrink-0" aria-hidden="true">
    <path d="M7.500 .5L14.700 13.500H.3z" fill="#f7e021" stroke="#a08c10" />
    <path d="M6.600 4.500h1.800v4.800H6.600zM6.600 10.300h1.800V12H6.600z" fill="#222" />
  </svg>
);

export default function App() {
  return (
    <div className={"flex h-screen min-h-[600px] flex-col overflow-hidden bg-white text-[11px] text-[#16161a] " + UI}>
      <TitleBar />
      <MenuBar />
      <Ribbon />
      <RibbonTabs />

      <main className="flex min-h-0 grow">
        <section className="flex w-[226px] shrink-0 flex-col">
          <PanelHead title="Project Manager" />
          <ul className="grow bg-white text-[10px] leading-4">
            <Rows nodes={projectTree} h={17} />
          </ul>
        </section>
        <div className={"w-1.5 " + DITHER} />
        <section className="flex w-[175px] shrink-0 flex-col overflow-hidden border-l border-[#77777c]">
          <ul className="grow overflow-hidden text-[11px] leading-4">
            <Rows nodes={modelTree} h={17} />
          </ul>
          <HScroll thumb="w-[127px]" />
        </section>
        <div className="w-[5px] shrink-0 border-l border-r border-l-[#d4d4d8] border-r-[#77777c] bg-[#f1f1f3]" />
        <section className="min-w-0 grow">
          <Viewport />
        </section>
        <div className={"w-1.5 " + DITHER} />
        <section className="flex w-[140px] shrink-0 flex-col bg-[#f0f0f0]">
          <PanelHead title="Component Librar..." />
          <div className="mx-1 mt-1 flex min-h-0 grow flex-col overflow-hidden border-b-2 border-r-2 border-[#77777c] bg-white pl-[3px] pr-0.5 pt-0.5">
            <ul className="grow overflow-hidden pt-0.5 font-['Liberation_Sans',sans-serif] text-[10px] leading-[14px]">
              <Rows nodes={libTree} h={15} />
            </ul>
            <HScroll thumb="w-[69px]" />
          </div>
          <div className="mb-1.5 ml-1 flex h-4">
            <button className="border-b border-r border-[#66666b] px-1.5 font-['Liberation_Sans',sans-serif] text-[10px]">Components</button>
          </div>
        </section>
      </main>

      <div className={"h-1.5 " + DITHER} />
      <section className="flex shrink-0 flex-col">
        <PanelHead title="Message Manager" />
        <ul className="h-[104px] pt-px font-['Liberation_Sans',sans-serif] text-[10px]">
          <li className="flex h-4 items-center">
            <Connector h={15} across mark="-" />
            <Logo />
            <span className="ml-1 bg-[#ececee] px-0.5 leading-[14px]">*Global - Messages</span>
          </li>
          <li className="flex h-[15px] items-center">
            <div className="w-[19px]" />
            <Connector h={15} up across />
            <Warn />
            <span className="ml-[3px] px-0.5">The application could not resolve the IP address of this machine: remote analysis and remote distributed analysis will not work.</span>
          </li>
        </ul>
      </section>

      <div className="flex h-[22px] shrink-0 items-center bg-[#ccd0d8] pl-1">
        <span className="grow">Nothing is selected</span>
        <button className="mr-1 flex h-[18px] w-[108px] items-center gap-2 border border-[#2a6ea8] bg-[#bcdcf4] pl-1 font-['Liberation_Sans',sans-serif] text-[10px] whitespace-nowrap">
          <svg width="12" height="11" viewBox="0 0 15 14" className="shrink-0" aria-hidden="true">
            <path d="M7.500 1L14.300 13H.7z" fill="#f7e021" stroke="#a08c10" />
            <path d="M6.500 4.500h2v4.500h-2zM6.500 10h2v1.600h-2z" fill="#222" />
          </svg>
          Hide 1 Messages
        </button>
        <button className="flex h-[18px] w-[98px] items-center gap-2 border border-[#b2b5bb] bg-[#e2e3e6] pl-1 font-['Liberation_Sans',sans-serif] text-[10px] whitespace-nowrap">
          <svg width="11" height="6" viewBox="0 0 11 6" className="shrink-0" aria-hidden="true"><path d="M0 0h11v2H0z" fill="#2a9a38" /><path d="M0 2h6v3H0z" fill="#7fd088" /></svg>
          Show Progress
        </button>
      </div>
      <Taskbar />
    </div>
  );
}
